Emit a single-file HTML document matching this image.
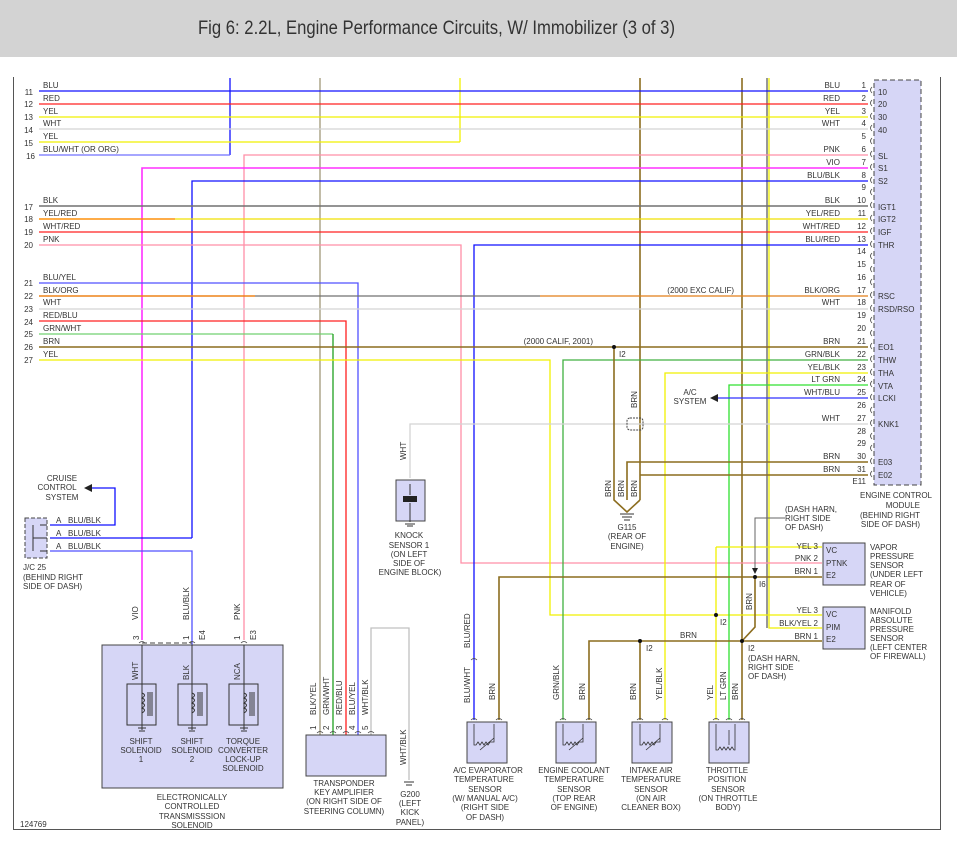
<!DOCTYPE html>
<html><head><meta charset="utf-8"><style>
html,body{margin:0;padding:0;background:#fff;}
svg{display:block;}
text{font-family:"Liberation Sans",sans-serif;font-size:8px;fill:#333;}
.r{text-anchor:end}
.m{text-anchor:middle}
.b{fill:#d6d6f6;stroke:#444;stroke-width:1}
</style></head><body>
<svg width="957" height="842" viewBox="0 0 957 842" xmlns="http://www.w3.org/2000/svg">
<rect x="0" y="0" width="957" height="57" fill="#d3d3d3"/>
<text x="198" y="34" style="font-size:19px;fill:#333" textLength="477" lengthAdjust="spacingAndGlyphs">Fig 6: 2.2L, Engine Performance Circuits, W/ Immobilizer (3 of 3)</text>
<path d="M13.5 77V829.5H940.5V77" fill="none" stroke="#555" stroke-width="1"/>
<rect x="874" y="80" width="47" height="405" fill="#d6d6f6" stroke="#444" stroke-dasharray="5,3"/>
<g fill="none" stroke-width="1.3">
<path d="M230 78V155" stroke="#1010ff"/>
<path d="M460 78V142" stroke="#f0f000"/>
<path d="M320 78V735" stroke="#a09878"/>
<path d="M640 78V500" stroke="#8c6d1f" stroke-width="1.6"/>
<path d="M742 78V720" stroke="#8c6d1f" stroke-width="1.6"/>
<path d="M767 78V628" stroke="#606060"/>
<path d="M769 78V628H822" stroke="#f0f000"/>
<path d="M39 91H868" stroke="#1010ff"/>
<path d="M39 104H868" stroke="#ff2020"/>
<path d="M39 117H868" stroke="#f0f000"/>
<path d="M39 129H868" stroke="#d4d4d4"/>
<path d="M39 142H460" stroke="#f0f000"/>
<path d="M39 155H230" stroke="#7070ff"/>
<path d="M244 640V155H868" stroke="#ff8fa8"/>
<path d="M142 640V168H868" stroke="#ff30ff" stroke-width="1.6"/>
<path d="M192 538V181H868" stroke="#1010ff"/>
<path d="M39 206H868" stroke="#707070" stroke-width="1.6"/>
<path d="M39 219H868" stroke="#f0e000"/>
<path d="M39 219H175" stroke="#ff8000"/>
<path d="M39 232H868" stroke="#ff2020"/>
<path d="M39 245H461V563H822" stroke="#ff8fa8"/>
<path d="M868 245H474V720" stroke="#1010ff"/>
<path d="M39 283H358V735" stroke="#5050ff"/>
<path d="M39 296H868" stroke="#707070"/>
<path d="M39 296H255" stroke="#ff8000"/>
<path d="M540 296H868" stroke="#ff8000" stroke-width="1"/>
<path d="M39 309H868" stroke="#d4d4d4"/>
<path d="M39 321H346V735" stroke="#ff2020"/>
<path d="M39 334H333" stroke="#70d070"/>
<path d="M333 334V735" stroke="#20a020"/>
<path d="M39 347H868" stroke="#8c6d1f" stroke-width="1.6"/>
<path d="M39 360H550V615H822" stroke="#f0f000"/>
<path d="M868 360H563V720" stroke="#40b040"/>
<path d="M868 373H665V720" stroke="#f0f000"/>
<path d="M868 385H729V720" stroke="#30e030"/>
<path d="M868 398H718" stroke="#3030ff"/>
<path d="M868 424H410V478" stroke="#d4d4d4"/>
<path d="M614 347V500L627 512L640 500M627 500V462H868" stroke="#8c6d1f" stroke-width="1.6"/>
<path d="M868 475H640" stroke="#8c6d1f" stroke-width="1.6"/>
<path d="M716 547H822M716 547V720" stroke="#f0f000"/>
<path d="M499 720V577H822" stroke="#8c6d1f" stroke-width="1.6"/>
<path d="M589 720V641H822M640 641V720M755 577V627L742 641" stroke="#8c6d1f" stroke-width="1.6"/>
<path d="M785 518H755V570" stroke="#666" stroke-width="1"/>
<path d="M371 735V628H409V780" stroke="#c0c0c0"/>
<path d="M50 525H115V488H92" stroke="#1010ff"/>
<path d="M50 538H192" stroke="#1010ff"/>
<path d="M50 551H192V645" stroke="#5050ff"/>
</g>
<polygon points="84,488 92,484 92,492" fill="#222"/>
<polygon points="710,398 718,394 718,402" fill="#222"/>
<polygon points="752,568 758,568 755,574" fill="#222"/>
<g fill="#111"><circle cx="614" cy="347" r="2"/><circle cx="755" cy="577" r="2"/><circle cx="716" cy="615" r="2"/><circle cx="640" cy="641" r="2"/><circle cx="742" cy="641" r="2"/></g>
<g>
<text x="33" y="95" class="r">11</text><text x="43" y="88">BLU</text>
<text x="33" y="107" class="r">12</text><text x="43" y="101">RED</text>
<text x="33" y="120" class="r">13</text><text x="43" y="114">YEL</text>
<text x="33" y="133" class="r">14</text><text x="43" y="126">WHT</text>
<text x="33" y="146" class="r">15</text><text x="43" y="139">YEL</text>
<text x="35" y="159" class="r">16</text><text x="43" y="152">BLU/WHT (OR ORG)</text>
<text x="33" y="210" class="r">17</text><text x="43" y="203">BLK</text>
<text x="33" y="222" class="r">18</text><text x="43" y="216">YEL/RED</text>
<text x="33" y="235" class="r">19</text><text x="43" y="229">WHT/RED</text>
<text x="33" y="248" class="r">20</text><text x="43" y="242">PNK</text>
<text x="33" y="286" class="r">21</text><text x="43" y="280">BLU/YEL</text>
<text x="33" y="299" class="r">22</text><text x="43" y="293">BLK/ORG</text>
<text x="33" y="312" class="r">23</text><text x="43" y="305">WHT</text>
<text x="33" y="325" class="r">24</text><text x="43" y="318">RED/BLU</text>
<text x="33" y="337" class="r">25</text><text x="43" y="331">GRN/WHT</text>
<text x="33" y="350" class="r">26</text><text x="43" y="344">BRN</text>
<text x="33" y="363" class="r">27</text><text x="43" y="357">YEL</text>
</g>
<g>
<text x="840" y="88" class="r">BLU</text><text x="840" y="101" class="r">RED</text><text x="840" y="114" class="r">YEL</text><text x="840" y="126" class="r">WHT</text>
<text x="840" y="152" class="r">PNK</text><text x="840" y="165" class="r">VIO</text><text x="840" y="178" class="r">BLU/BLK</text>
<text x="840" y="203" class="r">BLK</text><text x="840" y="216" class="r">YEL/RED</text><text x="840" y="229" class="r">WHT/RED</text><text x="840" y="242" class="r">BLU/RED</text>
<text x="734" y="293" class="r">(2000 EXC CALIF)</text>
<text x="840" y="293" class="r">BLK/ORG</text><text x="840" y="305" class="r">WHT</text>
<text x="593" y="344" class="r">(2000 CALIF, 2001)</text>
<text x="840" y="344" class="r">BRN</text><text x="840" y="357" class="r">GRN/BLK</text><text x="840" y="370" class="r">YEL/BLK</text><text x="840" y="382" class="r">LT GRN</text><text x="840" y="395" class="r">WHT/BLU</text><text x="840" y="421" class="r">WHT</text><text x="840" y="459" class="r">BRN</text><text x="840" y="472" class="r">BRN</text>
<text x="619" y="357">I2</text>
</g>
<g>
<text x="866" y="88" class="r">1</text><text x="866" y="101" class="r">2</text><text x="866" y="114" class="r">3</text><text x="866" y="126" class="r">4</text><text x="866" y="139" class="r">5</text><text x="866" y="152" class="r">6</text><text x="866" y="165" class="r">7</text><text x="866" y="178" class="r">8</text><text x="866" y="190" class="r">9</text><text x="866" y="203" class="r">10</text><text x="866" y="216" class="r">11</text><text x="866" y="229" class="r">12</text><text x="866" y="242" class="r">13</text><text x="866" y="254" class="r">14</text><text x="866" y="267" class="r">15</text><text x="866" y="280" class="r">16</text><text x="866" y="293" class="r">17</text><text x="866" y="305" class="r">18</text><text x="866" y="318" class="r">19</text><text x="866" y="331" class="r">20</text><text x="866" y="344" class="r">21</text><text x="866" y="357" class="r">22</text><text x="866" y="370" class="r">23</text><text x="866" y="382" class="r">24</text><text x="866" y="395" class="r">25</text><text x="866" y="408" class="r">26</text><text x="866" y="421" class="r">27</text><text x="866" y="434" class="r">28</text><text x="866" y="446" class="r">29</text><text x="866" y="459" class="r">30</text><text x="866" y="472" class="r">31</text>
<text x="866" y="484" class="r">E11</text>
</g>
<g>
<text x="878" y="95">10</text><text x="878" y="107">20</text><text x="878" y="120">30</text><text x="878" y="133">40</text>
<text x="878" y="159">SL</text><text x="878" y="171">S1</text><text x="878" y="184">S2</text>
<text x="878" y="210">IGT1</text><text x="878" y="222">IGT2</text><text x="878" y="235">IGF</text><text x="878" y="248">THR</text>
<text x="878" y="299">RSC</text><text x="878" y="312">RSD/RSO</text>
<text x="878" y="350">EO1</text><text x="878" y="363">THW</text><text x="878" y="376">THA</text><text x="878" y="389">VTA</text><text x="878" y="401">LCKI</text><text x="878" y="427">KNK1</text><text x="878" y="465">E03</text><text x="878" y="478">E02</text>
</g>
<g fill="none" stroke="#444" stroke-width="0.8">
<path d="M872 87q-3 3 0 6M872 100q-3 3 0 6M872 113q-3 3 0 6M872 125q-3 3 0 6M872 138q-3 3 0 6M872 151q-3 3 0 6M872 164q-3 3 0 6M872 177q-3 3 0 6M872 189q-3 3 0 6M872 202q-3 3 0 6M872 215q-3 3 0 6M872 228q-3 3 0 6M872 241q-3 3 0 6M872 253q-3 3 0 6M872 266q-3 3 0 6M872 279q-3 3 0 6M872 292q-3 3 0 6M872 305q-3 3 0 6M872 317q-3 3 0 6M872 330q-3 3 0 6M872 343q-3 3 0 6M872 356q-3 3 0 6M872 369q-3 3 0 6M872 381q-3 3 0 6M872 394q-3 3 0 6M872 407q-3 3 0 6M872 420q-3 3 0 6M872 433q-3 3 0 6M872 445q-3 3 0 6M872 458q-3 3 0 6M872 471q-3 3 0 6"/>
<path d="M471 660q3-3 6 0M496 720q3-3 6 0M471 720q3-3 6 0M560 720q3-3 6 0M586 720q3-3 6 0M637 720q3-3 6 0M662 720q3-3 6 0M713 720q3-3 6 0M726 720q3-3 6 0M739 720q3-3 6 0"/>
<path d="M139 643q3-3 6 0M189 643q3-3 6 0M241 643q3-3 6 0"/>
<path d="M317 733q3-3 6 0M330 733q3-3 6 0M343 733q3-3 6 0M355 733q3-3 6 0M368 733q3-3 6 0"/>
</g>
<text x="896" y="498" class="m">ENGINE CONTROL</text><text x="920" y="508" class="r">MODULE</text><text x="920" y="518" class="r">(BEHIND RIGHT</text><text x="920" y="527" class="r">SIDE OF DASH)</text>
<text x="690" y="395" class="m">A/C</text><text x="690" y="404" class="m">SYSTEM</text>
<rect x="627" y="418" width="16" height="12" rx="3" fill="none" stroke="#444" stroke-dasharray="2,1"/>
<text transform="translate(637,408) rotate(-90)">BRN</text>
<text transform="translate(611,497) rotate(-90)">BRN</text><text transform="translate(624,497) rotate(-90)">BRN</text><text transform="translate(637,497) rotate(-90)">BRN</text>
<path d="M620 514h14M622 517h10M624 520h6" stroke="#333"/>
<text x="627" y="530" class="m">G115</text><text x="627" y="539" class="m">(REAR OF</text><text x="627" y="549" class="m">ENGINE)</text>
<text x="62" y="481" class="m">CRUISE</text><text x="57" y="490" class="m">CONTROL</text><text x="62" y="500" class="m">SYSTEM</text>
<rect x="25" y="518" width="22" height="40" fill="#d6d6f6" stroke="#444" stroke-dasharray="4,2"/>
<path d="M33 525V551M33 538H47M40 525H47M40 551H47" stroke="#333" fill="none"/>
<text x="56" y="523">A</text><text x="68" y="523">BLU/BLK</text>
<text x="56" y="536">A</text><text x="68" y="536">BLU/BLK</text>
<text x="56" y="549">A</text><text x="68" y="549">BLU/BLK</text>
<text x="23" y="570">J/C 25</text><text x="23" y="580">(BEHIND RIGHT</text><text x="23" y="589">SIDE OF DASH)</text>
<rect x="396" y="480" width="29" height="41" class="b"/>
<path d="M410 484V495M410 503V522M405 524h10M407 526h6" stroke="#333" fill="none"/>
<rect x="403" y="496" width="14" height="6" fill="#222"/>
<text transform="translate(406,460) rotate(-90)">WHT</text>
<text x="409" y="538" class="m">KNOCK</text><text x="409" y="548" class="m">SENSOR 1</text><text x="409" y="557" class="m">(ON LEFT</text><text x="409" y="566" class="m">SIDE OF</text><text x="410" y="575" class="m">ENGINE BLOCK)</text>
<rect x="102" y="645" width="181" height="143" class="b"/>
<path d="M142 643H192" stroke="#444" stroke-dasharray="5,3"/>
<g fill="none" stroke="#333">
<rect x="127" y="684" width="29" height="41"/><rect x="178" y="684" width="29" height="41"/><rect x="229" y="684" width="29" height="41"/>
<path d="M142 645V730M192 645V730M244 645V730"/>
<path d="M138 728h8M139 731h6M188 728h8M189 731h6M240 728h8M241 731h6"/>
<path d="M142 693q5 2 0 5q5 2 0 5q5 2 0 5q5 2 0 5M148 692V716M150 692V716M152 692V716"/>
<path d="M192 693q5 2 0 5q5 2 0 5q5 2 0 5q5 2 0 5M198 692V716M200 692V716M202 692V716"/>
<path d="M244 693q5 2 0 5q5 2 0 5q5 2 0 5q5 2 0 5M250 692V716M252 692V716M254 692V716"/>
</g>
<text transform="translate(139,640) rotate(-90)">3</text><text transform="translate(189,640) rotate(-90)">1</text><text transform="translate(240,640) rotate(-90)">1</text>
<text transform="translate(205,640) rotate(-90)">E4</text><text transform="translate(256,640) rotate(-90)">E3</text>
<text transform="translate(138,620) rotate(-90)">VIO</text><text transform="translate(189,620) rotate(-90)">BLU/BLK</text><text transform="translate(240,620) rotate(-90)">PNK</text>
<text transform="translate(138,680) rotate(-90)">WHT</text><text transform="translate(189,680) rotate(-90)">BLK</text><text transform="translate(240,680) rotate(-90)">NCA</text>
<text x="141" y="744" class="m">SHIFT</text><text x="141" y="753" class="m">SOLENOID</text><text x="141" y="762" class="m">1</text>
<text x="192" y="744" class="m">SHIFT</text><text x="192" y="753" class="m">SOLENOID</text><text x="192" y="762" class="m">2</text>
<text x="243" y="744" class="m">TORQUE</text><text x="243" y="753" class="m">CONVERTER</text><text x="243" y="762" class="m">LOCK-UP</text><text x="243" y="771" class="m">SOLENOID</text>
<text x="192" y="800" class="m">ELECTRONICALLY</text><text x="192" y="809" class="m">CONTROLLED</text><text x="192" y="819" class="m">TRANSMISSSION</text><text x="192" y="828" class="m">SOLENOID</text>
<text x="20" y="827">124769</text>
<rect x="306" y="735" width="80" height="41" class="b"/>
<text transform="translate(316,715) rotate(-90)">BLK/YEL</text><text transform="translate(329,715) rotate(-90)">GRN/WHT</text><text transform="translate(342,715) rotate(-90)">RED/BLU</text><text transform="translate(355,715) rotate(-90)">BLU/YEL</text><text transform="translate(368,715) rotate(-90)">WHT/BLK</text>
<text transform="translate(316,730) rotate(-90)">1</text><text transform="translate(329,730) rotate(-90)">2</text><text transform="translate(342,730) rotate(-90)">3</text><text transform="translate(355,730) rotate(-90)">4</text><text transform="translate(368,730) rotate(-90)">5</text>
<text x="344" y="786" class="m">TRANSPONDER</text><text x="344" y="795" class="m">KEY AMPLIFIER</text><text x="344" y="804" class="m">(ON RIGHT SIDE OF</text><text x="344" y="814" class="m">STEERING COLUMN)</text>
<text transform="translate(406,765) rotate(-90)">WHT/BLK</text>
<path d="M404 782h10M406 785h6" stroke="#333"/>
<text x="410" y="797" class="m">G200</text><text x="410" y="806" class="m">(LEFT</text><text x="410" y="815" class="m">KICK</text><text x="410" y="825" class="m">PANEL)</text>
<g>
<rect x="467" y="722" width="40" height="41" class="b"/><rect x="556" y="722" width="40" height="41" class="b"/><rect x="632" y="722" width="40" height="41" class="b"/><rect x="709" y="722" width="40" height="41" class="b"/>
<g fill="none" stroke="#333" stroke-width="0.8">
<path d="M474 724V745h2l2-3 2 3 2-3 2 3 2-3 2 3 2-3h4V724M480 750L494 738"/>
<path d="M563 724V745h2l2-3 2 3 2-3 2 3 2-3 2 3 2-3h4V724M569 750L583 738"/>
<path d="M640 724V745h2l2-3 2 3 2-3 2 3 2-3 2 3 2-3h4V724M646 750L660 738"/>
<path d="M716 724V750h2l2-3 2 3 2-3 2 3 2-3 2 3 2-3 2 3h1V724M729 730V745"/>
</g>
</g>
<text transform="translate(470,648) rotate(-90)">BLU/RED</text><text transform="translate(470,703) rotate(-90)">BLU/WHT</text><text transform="translate(495,700) rotate(-90)">BRN</text>
<text transform="translate(559,700) rotate(-90)">GRN/BLK</text><text transform="translate(585,700) rotate(-90)">BRN</text>
<text transform="translate(636,700) rotate(-90)">BRN</text><text transform="translate(662,700) rotate(-90)">YEL/BLK</text>
<text transform="translate(713,700) rotate(-90)">YEL</text><text transform="translate(726,700) rotate(-90)">LT GRN</text><text transform="translate(738,700) rotate(-90)">BRN</text>
<text x="488" y="773" class="m">A/C EVAPORATOR</text><text x="484" y="782" class="m">TEMPERATURE</text><text x="485" y="792" class="m">SENSOR</text><text x="485" y="801" class="m">(W/ MANUAL A/C)</text><text x="485" y="810" class="m">(RIGHT SIDE</text><text x="485" y="820" class="m">OF DASH)</text>
<text x="574" y="773" class="m">ENGINE COOLANT</text><text x="574" y="782" class="m">TEMPERATURE</text><text x="574" y="792" class="m">SENSOR</text><text x="574" y="801" class="m">(TOP REAR</text><text x="574" y="810" class="m">OF ENGINE)</text>
<text x="651" y="773" class="m">INTAKE AIR</text><text x="651" y="782" class="m">TEMPERATURE</text><text x="651" y="792" class="m">SENSOR</text><text x="651" y="801" class="m">(ON AIR</text><text x="651" y="810" class="m">CLEANER BOX)</text>
<text x="727" y="773" class="m">THROTTLE</text><text x="727" y="782" class="m">POSITION</text><text x="728" y="792" class="m">SENSOR</text><text x="728" y="801" class="m">(ON THROTTLE</text><text x="728" y="810" class="m">BODY)</text>
<text x="646" y="651">I2</text><text x="720" y="625">I2</text><text x="748" y="651">I2</text><text x="759" y="587">I6</text><text x="680" y="638">BRN</text>
<text transform="translate(752,610) rotate(-90)">BRN</text>
<text x="748" y="661">(DASH HARN,</text><text x="748" y="670">RIGHT SIDE</text><text x="748" y="679">OF DASH)</text>
<text x="785" y="512">(DASH HARN,</text><text x="785" y="521">RIGHT SIDE</text><text x="785" y="530">OF DASH)</text>
<rect x="823" y="543" width="42" height="42" class="b"/>
<rect x="823" y="607" width="42" height="42" class="b"/>
<text x="826" y="553">VC</text><text x="826" y="566">PTNK</text><text x="826" y="578">E2</text>
<text x="826" y="617">VC</text><text x="826" y="630">PIM</text><text x="826" y="642">E2</text>
<text x="818" y="549" class="r">YEL 3</text><text x="818" y="561" class="r">PNK 2</text><text x="818" y="574" class="r">BRN 1</text>
<text x="818" y="613" class="r">YEL 3</text><text x="818" y="626" class="r">BLK/YEL 2</text><text x="818" y="639" class="r">BRN 1</text>
<text x="870" y="550">VAPOR</text><text x="870" y="559">PRESSURE</text><text x="870" y="568">SENSOR</text><text x="870" y="577">(UNDER LEFT</text><text x="870" y="587">REAR OF</text><text x="870" y="596">VEHICLE)</text>
<text x="870" y="614">MANIFOLD</text><text x="870" y="623">ABSOLUTE</text><text x="870" y="632">PRESSURE</text><text x="870" y="641">SENSOR</text><text x="870" y="650">(LEFT CENTER</text><text x="870" y="659">OF FIREWALL)</text>
</svg>
</body></html>
